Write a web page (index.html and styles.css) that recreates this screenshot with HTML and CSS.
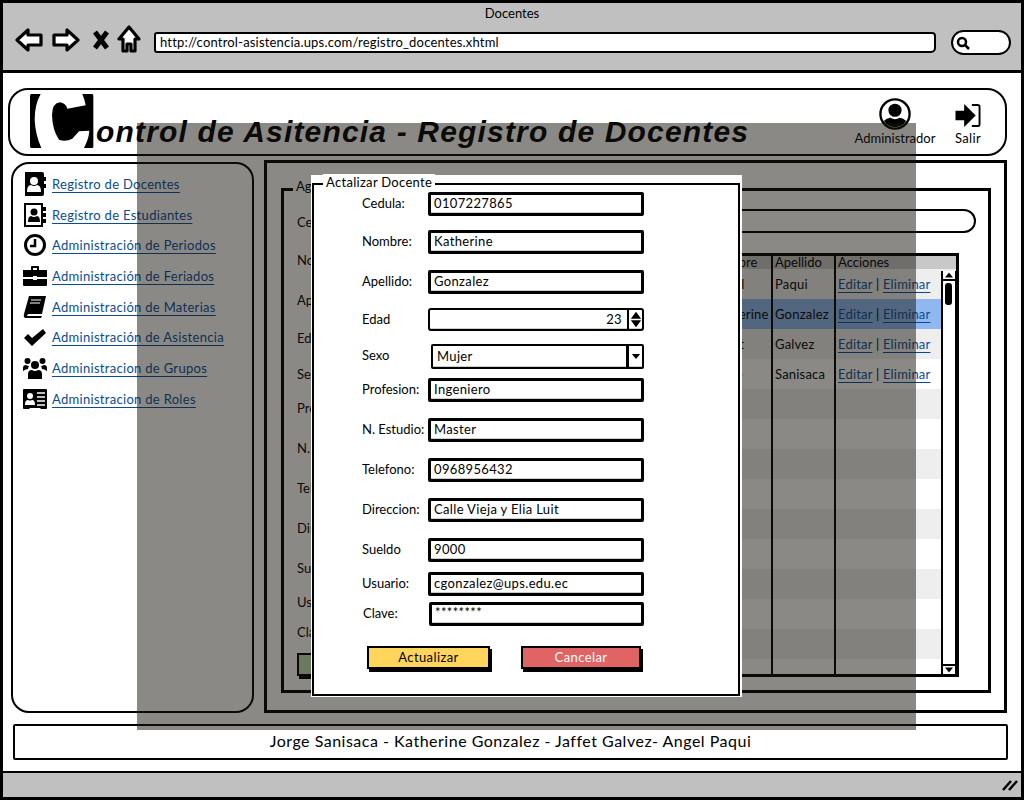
FILE: index.html
```html
<!DOCTYPE html>
<html lang="es">
<head>
<meta charset="utf-8">
<title>Docentes</title>
<link rel="stylesheet" href="styles.css">
</head>
<body>
<div class="window">
  <header class="chrome">
    <div class="chrome-title">Docentes</div>
    <div class="chrome-bar">
      <svg class="nav-icon back" viewBox="0 0 28 24"><path d="M2 12 13 2v5h13v10H13v5z"/></svg>
      <svg class="nav-icon forward" viewBox="0 0 28 24"><path d="M26 12 15 2v5H2v10h13v5z"/></svg>
      <svg class="nav-x" viewBox="0 0 18 20"><path d="M3 2l12 16M15 2 3 18"/></svg>
      <svg class="nav-icon home" viewBox="0 0 24 28"><path d="M12 2 2 14h4v12h4v-7h4v7h4V14h4z"/></svg>
      <div class="url">http://control-asistencia.ups.com/registro_docentes.xhtml</div>
      <div class="search-mini"><svg viewBox="0 0 14 14"><circle cx="6" cy="6" r="4"/><path d="M9 9l4 4"/></svg></div>
    </div>
  </header>

  <div class="content">
    <div class="site-header">
      <svg class="logo" viewBox="18 18 198 168"><path d="M22 18H50Q32 50 32 95 34 140 52 180H22Q18 180 18 175V25Q18 18 22 18Z"/><path d="M178 18H205Q208 18 208 24V176Q208 180 204 180H180Q195 150 196 128L165 130 145 152Q125 162 105 155 85 125 84 80 85 45 108 43 125 45 130 62L185 52Q182 35 175 18Z"/></svg>
      <h1 class="site-title">ontrol de Asitencia - Registro de Docentes</h1>
      <div class="site-actions">
        <div class="action action-admin">
          <svg class="action-icon" viewBox="0 0 34 34"><defs><clipPath id="uc"><circle cx="17" cy="17" r="14"/></clipPath></defs><circle cx="17" cy="17" r="15.5" fill="#fff" stroke="#000" stroke-width="2.5"/><g clip-path="url(#uc)"><circle cx="17" cy="13" r="7"/><path d="M3 33q0-11 9-12 5 3 10 0 9 1 9 12z"/></g></svg>
          <span>Administrador</span>
        </div>
        <div class="action action-exit">
          <svg class="action-icon exit-icon" viewBox="0 0 28 26"><path d="M1 8h9V1l12 12-12 12v-7H1z"/><path d="M18 2h6q2 0 2 2v18q0 2-2 2h-6" fill="none" stroke="#000" stroke-width="2"/></svg>
          <span>Salir</span>
        </div>
      </div>
    </div>

    <div class="body-row">
      <nav class="sidebar">
        <div class="side-item">
          <svg class="side-icon" viewBox="0 0 24 24"><path d="M2 0h17q2 0 2 2v3h2v4h-2v3h2v4h-2v6q0 2-2 2H2z"/><circle cx="11" cy="9" r="4" fill="#fff"/><path d="M4 20q0-7 4-7 3 2 6 0 4 0 4 7z" fill="#fff"/></svg>
          <a href="#">Registro de Docentes</a>
        </div>
        <div class="side-item">
          <svg class="side-icon" viewBox="0 0 24 24"><path d="M2 1h17v22H2z" fill="#fff" stroke="#000" stroke-width="2"/><path d="M20 4h3v4h-3zM20 10h3v4h-3zM20 16h3v4h-3z"/><circle cx="11" cy="9" r="3.5"/><path d="M5 19q0-6 3-6 3 2 6 0 3 0 3 6z"/></svg>
          <a href="#">Registro de Estudiantes</a>
        </div>
        <div class="side-item">
          <svg class="side-icon" viewBox="0 0 24 24"><circle cx="12" cy="12" r="9.5" fill="#fff" stroke="#000" stroke-width="3"/><path d="M12 6v7H7" fill="none" stroke="#000" stroke-width="2.5"/></svg>
          <a href="#">Administración de Periodos</a>
        </div>
        <div class="side-item">
          <svg class="side-icon" viewBox="0 0 24 24"><path d="M8 6V3q0-1 1-1h6q1 0 1 1v3h-2V4h-4v2z"/><path d="M0 6h24v7H14v-1h-4v1H0zM0 15h10v1h4v-1h10v6q0 1-1 1H1q-1 0-1-1z"/></svg>
          <a href="#">Administración de Feriados</a>
        </div>
        <div class="side-item">
          <svg class="side-icon" viewBox="0 0 24 24"><path d="M6 1h17l-4 18H6q-2 0-2 2h15l-1 2H3q-3 0-2-4z"/><path d="M8 5h10M7 8h10" stroke="#fff" fill="none"/></svg>
          <a href="#">Administración de Materias</a>
        </div>
        <div class="side-item">
          <svg class="side-icon" viewBox="0 0 24 24"><path d="M1 13l4-4 4 4L20 4l3 4L9 21z"/></svg>
          <a href="#">Administración de Asistencia</a>
        </div>
        <div class="side-item">
          <svg class="side-icon" viewBox="0 0 24 24"><circle cx="12" cy="9" r="4"/><circle cx="4.5" cy="5" r="3"/><circle cx="19.5" cy="5" r="3"/><path d="M5 23v-5q0-4 4-4 3 2 6 0 4 0 4 4v5z"/><path d="M0 15v-3q0-3 3-3 2 1 3 1-1 2-1 3-2 0-5 2zM24 15v-3q0-3-3-3-2 1-3 1 1 2 1 3 2 0 5 2z"/></svg>
          <a href="#">Administracion de Grupos</a>
        </div>
        <div class="side-item">
          <svg class="side-icon" viewBox="0 0 24 24"><path d="M1 2h22q1 0 1 1v18q0 1-1 1h-5l-1-1H7l-1 1H1q-1 0-1-1V3q0-1 1-1z"/><circle cx="7" cy="9" r="3" fill="#fff"/><path d="M2 18q0-5 3-5 2 1 4 0 3 0 3 5z" fill="#fff"/><path d="M14 6h8M14 10h8M14 14h8M14 18h8" stroke="#fff" stroke-width="1.6" fill="none"/></svg>
          <a href="#">Administracion de Roles</a>
        </div>
      </nav>

      <main class="main-panel">
        <section class="group">
          <div class="legend">Agregar Docente</div>
          <div class="page-form">
            <div class="form-grid">
              <label>Cedula:</label><div class="field"></div>
              <label>Nombre:</label><div class="field"></div>
              <label>Apellido:</label><div class="field"></div>
              <label>Edad</label><div class="field"></div>
              <label>Sexo</label><div class="field"></div>
              <label>Profesion:</label><div class="field"></div>
              <label>N. Estudio:</label><div class="field"></div>
              <label>Telefono:</label><div class="field"></div>
              <label>Direccion:</label><div class="field"></div>
              <label>Sueldo</label><div class="field"></div>
              <label>Usuario:</label><div class="field"></div>
              <label>Clave:</label><div class="field"></div>
            </div>
            <div class="add-btn">Guardar</div>
          </div>
          <div class="page-right">
            <div class="search-pill"></div>
            <div class="table-wrap">
              <table class="data-table">
                <colgroup><col class="c1"><col class="c2"><col class="c3"><col class="c4"></colgroup>
                <thead><tr><th>Cedula</th><th>Nombre</th><th>Apellido</th><th>Acciones</th></tr></thead>
                <tbody>
                  <tr class="alt"><td>0107227861</td><td>Angel</td><td>Paqui</td><td><a href="#">Editar</a> | <a href="#">Eliminar</a></td></tr>
                  <tr class="sel"><td>0107227865</td><td>Katherine</td><td>Gonzalez</td><td><a href="#">Editar</a> | <a href="#">Eliminar</a></td></tr>
                  <tr class="alt"><td>0107227862</td><td>Jaffet</td><td>Galvez</td><td><a href="#">Editar</a> | <a href="#">Eliminar</a></td></tr>
                  <tr><td>0107227863</td><td>Jorge</td><td>Sanisaca</td><td><a href="#">Editar</a> | <a href="#">Eliminar</a></td></tr>
                  <tr class="alt"><td></td><td></td><td></td><td></td></tr>
                  <tr><td></td><td></td><td></td><td></td></tr>
                  <tr class="alt"><td></td><td></td><td></td><td></td></tr>
                  <tr><td></td><td></td><td></td><td></td></tr>
                  <tr class="alt"><td></td><td></td><td></td><td></td></tr>
                  <tr><td></td><td></td><td></td><td></td></tr>
                  <tr class="alt"><td></td><td></td><td></td><td></td></tr>
                  <tr><td></td><td></td><td></td><td></td></tr>
                  <tr class="alt"><td></td><td></td><td></td><td></td></tr>
                  <tr class="last"><td></td><td></td><td></td><td></td></tr>
                </tbody>
              </table>
              <div class="scrollbar">
                <svg class="scroll-btn" viewBox="0 0 12 10"><path d="M6 2l5 6H1z"/></svg>
                <div class="scroll-thumb"></div>
                <svg class="scroll-btn down" viewBox="0 0 12 10"><path d="M6 8L1 2h10z"/></svg>
              </div>
            </div>
          </div>
        </section>
      </main>
    </div>

    <footer class="footer">Jorge Sanisaca - Katherine Gonzalez - Jaffet Galvez- Angel Paqui</footer>
  </div>

  <div class="statusbar">
    <svg class="grip" viewBox="0 0 16 12"><path d="M1 11 9 2M7 11l8-9"/></svg>
  </div>

  <div class="overlay"></div>

  <div class="modal">
    <div class="modal-frame">
      <div class="legend modal-legend">Actalizar Docente</div>
      <div class="form-grid">
        <label>Cedula:</label><div class="field">0107227865</div>
        <label>Nombre:</label><div class="field">Katherine</div>
        <label>Apellido:</label><div class="field">Gonzalez</div>
        <label>Edad</label>
        <div class="field spinner"><span class="spin-val">23</span><svg class="spin-btn" viewBox="0 0 14 20"><path d="M7 1l6 8H1zM7 19l-6-8h12z"/></svg></div>
        <label>Sexo</label>
        <div class="field select"><span class="select-val">Mujer</span><span class="select-btn"><svg viewBox="0 0 12 8"><path d="M1 1h10L6 7z"/></svg></span></div>
        <label>Profesion:</label><div class="field">Ingeniero</div>
        <label>N. Estudio:</label><div class="field">Master</div>
        <label>Telefono:</label><div class="field">0968956432</div>
        <label>Direccion:</label><div class="field">Calle Vieja y Elia Luit</div>
        <label>Sueldo</label><div class="field">9000</div>
        <label>Usuario:</label><div class="field">cgonzalez@ups.edu.ec</div>
        <label class="label-clave">Clave:</label><div class="field field-clave">********</div>
      </div>
      <div class="modal-actions">
        <div class="btn btn-yellow">Actualizar</div>
        <div class="btn btn-red">Cancelar</div>
      </div>
    </div>
  </div>
</div>
</body>
</html>
```
FILE: styles.css
```css
* { box-sizing: border-box; }
html, body { margin: 0; padding: 0; }
body { font-family: "Lato", "Liberation Sans", sans-serif; font-size: 13px; color: #000; background: #fff; }

.window {
  position: relative; width: 1024px; height: 800px; overflow: hidden;
  border: 3px solid #000; display: flex; flex-direction: column; background: #fff;
}

/* browser chrome */
.chrome { height: 70px; flex: none; background: #c0c0c0; border-bottom: 3px solid #000; }
.chrome-title { text-align: center; line-height: 16px; padding-top: 2px; height: 20px; }
.chrome-bar { display: flex; align-items: center; padding-left: 12px; height: 32px; margin-top: 1px; }
.nav-icon { fill: #fff; stroke: #000; stroke-width: 3.2; stroke-linejoin: round; flex: none; }
.back, .forward { width: 28px; height: 24px; }
.forward { margin-left: 9px; }
.nav-x { width: 18px; height: 20px; margin-left: 12px; fill: none; stroke: #000; stroke-width: 5; flex: none; }
.home { width: 24px; height: 28px; margin-left: 7px; margin-top: -2px; }
.url {
  width: 782px; height: 21px; margin-left: 13px; margin-top: 4px; padding-left: 4px;
  background: #fff; border: 2px solid #000; border-radius: 3px 4px 5px 3px;
  line-height: 16px; flex: none; letter-spacing: .19px; white-space: nowrap;
}
.search-mini {
  width: 60px; height: 25px; margin-left: 15px; margin-top: 4px; flex: none;
  background: #fff; border: 2px solid #000; border-radius: 13px; padding: 4px 0 0 3px;
}
.search-mini svg { display: block; width: 14px; height: 14px; fill: none; stroke: #000; stroke-width: 2.5; }

/* page content */
.content { flex: 1; min-height: 0; display: flex; flex-direction: column; padding: 15px 14px 11px 5px; }
.site-header {
  height: 68px; flex: none; display: flex; position: relative;
  border: 2px solid #000; border-radius: 20px; padding-left: 20px;
}
.logo { width: 66px; height: 56px; flex: none; margin-top: 4px; }
.site-title {
  margin: 23px 0 0 0; font-size: 30px; line-height: 38px; font-weight: 700; font-style: italic;
  font-family: "Liberation Sans", sans-serif; letter-spacing: 1.17px; white-space: nowrap; flex: none;
}
.site-actions { margin-left: auto; display: flex; padding-right: 23px; }
.action { display: flex; flex-direction: column; align-items: center; }
.action span { line-height: 16px; }
.action-icon { display: block; }
.action-admin { width: 82px; margin-right: 18px; }
.action-admin .action-icon { width: 32px; height: 32px; margin-top: 8px; }
.action-exit { width: 28px; }
.action-exit span { letter-spacing: .3px; }
.exit-icon { width: 28px; height: 25px; margin-top: 13px; margin-bottom: 2px; }

.body-row { display: flex; margin-top: 4px; height: 553px; flex: none; }
.sidebar {
  width: 243px; height: 551px; margin: 2px 10px 0 3px; flex: none; padding: 4.5px 0 0 10px;
  border: 2px solid #000; border-radius: 18px;
  display: grid; grid-auto-rows: 30.7px; align-content: start;
}
.side-item { display: flex; align-items: center; gap: 5px; }
.side-icon { width: 24px; height: 24px; flex: none; }
.side-item a { letter-spacing: .3px; }
a { color: #0a4c94; text-decoration: underline; text-underline-offset: 3px; }

.main-panel {
  width: 743px; flex: none; height: 553px; border: 3px solid #000; padding: 25px 13px 17px 14px;
}
.group {
  position: relative; height: 505px; border: 3px solid #000; display: flex;
}
.legend {
  position: absolute; left: 9px; top: -13px; background: #fff; padding: 0 3px; line-height: 16px; white-space: nowrap;
}

.form-grid {
  display: grid; grid-template-columns: 66px 216px;
  grid-template-rows: 38px 40px 38px 36px 34px 40px 40px 40px 40px 34px 30px 25px;
  align-items: start;
}
.form-grid label { line-height: 22px; white-space: nowrap; }
.field {
  height: 24px; border: 3px solid #000; border-radius: 2px; background: #fff;
  box-shadow: inset 0 -1px 0 #ccc; padding-left: 3px; line-height: 17px; letter-spacing: .35px; white-space: nowrap;
}
.page-form { width: 240px; flex: none; padding: 20px 0 0 13px; overflow: hidden; }
.add-btn {
  width: 110px; height: 23px; margin-top: 7px; color: #000; text-align: center;
  background: #c0e0ae; border: 2px solid #000; box-shadow: 2px 3px 0 #000;
}
.page-right { flex: 1; min-width: 0; padding: 18px 12px 0 0; }
.search-pill { height: 24px; border: 2px solid #000; border-radius: 0 12px 12px 0; background: #fff; }
.table-wrap { position: relative; margin: 20px 17px 0 0; height: 424px; border: 3px solid #000; border-left-width: 2px; background: #fff; overflow: hidden; }
.data-table { border-collapse: collapse; table-layout: fixed; width: 100%; }
.c1 { width: 182px; } .c2 { width: 64px; } .c3 { width: 63px; }
.data-table th { height: 13px; background: #c8c8c8; font-weight: 400; text-align: left; padding: 0 2px; line-height: 13px; border-right: 2px solid #000; white-space: nowrap; }
.data-table td { height: 30px; padding: 0 2px; border-right: 2px solid #000; white-space: nowrap; overflow: hidden; letter-spacing: .2px; }
.data-table th:last-child, .data-table td:last-child { border-right: 0; }
.data-table .last td { height: 18px; }
.alt td { background: #eee; }
.sel td { background: #8fb8f0; }
.scrollbar {
  position: absolute; right: 0; top: 15px; bottom: 0; width: 15px; background: #fff;
  border-left: 2px solid #000; border-right: 1px solid #000; display: flex; flex-direction: column;
}
.scroll-btn { width: 12px; height: 10px; flex: none; border-bottom: 2px solid #000; background: #fff; }
.scroll-btn.down { margin-top: auto; border-bottom: 0; border-top: 2px solid #000; }
.scroll-thumb { width: 7px; height: 22px; margin: 2px 0 0 2px; background: #000; border-radius: 3px; }

.footer {
  height: 36px; flex: none; margin: 11px -1px 0 5px; border: 2px solid #000; border-radius: 2px;
  text-align: center; font-size: 16px; line-height: 30px; letter-spacing: .5px; white-space: nowrap;
}
.statusbar { height: 26px; flex: none; border-top: 2px solid #000; background: #c0c0c0; display: flex; justify-content: flex-end; align-items: center; padding-right: 3px; }
.grip { width: 16px; height: 12px; fill: none; stroke: #000; stroke-width: 2.5; }

/* modal */
.overlay { position: absolute; left: 134px; top: 120px; width: 779px; height: 607px; background: rgba(22, 20, 14, .5); }
.modal { position: absolute; left: 308px; top: 172px; width: 431px; height: 522px; background: #fff; padding: 8px 2px 1px 1px; }
.modal-frame { position: relative; height: 100%; border: 2px solid #000; padding: 7px 0 0 48px; }
.modal-legend { left: 9px; top: -11px; letter-spacing: .3px; }
.spinner { display: flex; align-items: center; height: 23px; border-width: 2px; padding: 0; border-radius: 3px; }
.spin-val { flex: 1; text-align: right; padding-right: 5px; line-height: 17px; }
.spin-btn { width: 15px; height: 19px; flex: none; border-left: 2px solid #000; padding-left: 1px; }
.select { display: flex; height: 25px; margin-left: 3px; width: 213px; padding: 0 0 0 4px; border-width: 2px; line-height: 20px; }
.select-val { flex: 1; }
.select-btn { width: 16px; flex: none; border-left: 3px solid #000; display: flex; align-items: center; justify-content: center; }
.select-btn svg { width: 10px; height: 7px; }
.label-clave { padding-left: 1px; }
.field-clave { margin-left: 1px; line-height: 14px; }
.modal-actions { display: flex; gap: 31px; margin: 19px 0 0 5px; }
.btn {
  height: 23px; text-align: center; line-height: 19px; border: 2px solid #000;
  box-shadow: 2px 3px 0 #000; letter-spacing: .4px;
}
.btn-yellow { width: 123px; background: #ffd65b; }
.btn-red { width: 120px; background: #e06464; color: #fff; }
```
